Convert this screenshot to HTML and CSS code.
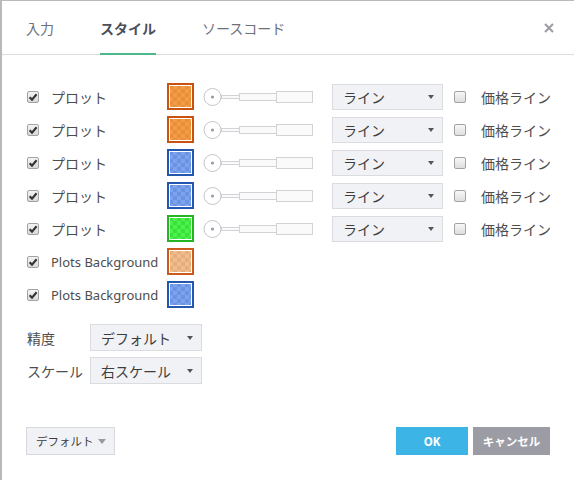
FILE: index.html
```html
<!DOCTYPE html>
<html lang="ja">
<head>
<meta charset="utf-8">
<link rel="stylesheet" href="styles.css">
</head>
<body>
<div class="dialog">
  <div class="tabs">
    <div class="tab">入力</div>
    <div class="tab active">スタイル</div>
    <div class="tab">ソースコード</div>
    <div class="close"><svg width="10" height="10" viewBox="0 0 10 10"><path d="M1 1L9 9M9 1L1 9" stroke="#9b9ca4" stroke-width="2"/></svg></div>
  </div>

  <div class="content">
    <div class="rows">
      <div class="row">
        <span class="cb checked"></span><span class="lbl">プロット</span>
        <span class="sw orange"></span>
        <svg class="slider" width="111" height="20" viewBox="0 0 111 20"><rect x="18.5" y="8.5" width="18" height="3" fill="#fafafa" stroke="#d2d3d6"/><rect x="36.5" y="6.5" width="37" height="7" fill="#fafafa" stroke="#d2d3d6"/><rect x="73.5" y="4.5" width="36" height="11" fill="#fafafa" stroke="#d2d3d6"/><circle cx="9.5" cy="10" r="8.5" fill="#fff" stroke="#c4c6cb"/><circle cx="9.5" cy="10" r="1.6" fill="#9a9ca3"/></svg>
        <div class="dd wide"><span>ライン</span><i class="arr"></i></div>
        <span class="cb"></span><span class="lbl">価格ライン</span>
      </div>
      <div class="row">
        <span class="cb checked"></span><span class="lbl">プロット</span>
        <span class="sw orange"></span>
        <svg class="slider" width="111" height="20" viewBox="0 0 111 20"><rect x="18.5" y="8.5" width="18" height="3" fill="#fafafa" stroke="#d2d3d6"/><rect x="36.5" y="6.5" width="37" height="7" fill="#fafafa" stroke="#d2d3d6"/><rect x="73.5" y="4.5" width="36" height="11" fill="#fafafa" stroke="#d2d3d6"/><circle cx="9.5" cy="10" r="8.5" fill="#fff" stroke="#c4c6cb"/><circle cx="9.5" cy="10" r="1.6" fill="#9a9ca3"/></svg>
        <div class="dd wide"><span>ライン</span><i class="arr"></i></div>
        <span class="cb"></span><span class="lbl">価格ライン</span>
      </div>
      <div class="row">
        <span class="cb checked"></span><span class="lbl">プロット</span>
        <span class="sw blue"></span>
        <svg class="slider" width="111" height="20" viewBox="0 0 111 20"><rect x="18.5" y="8.5" width="18" height="3" fill="#fafafa" stroke="#d2d3d6"/><rect x="36.5" y="6.5" width="37" height="7" fill="#fafafa" stroke="#d2d3d6"/><rect x="73.5" y="4.5" width="36" height="11" fill="#fafafa" stroke="#d2d3d6"/><circle cx="9.5" cy="10" r="8.5" fill="#fff" stroke="#c4c6cb"/><circle cx="9.5" cy="10" r="1.6" fill="#9a9ca3"/></svg>
        <div class="dd wide"><span>ライン</span><i class="arr"></i></div>
        <span class="cb"></span><span class="lbl">価格ライン</span>
      </div>
      <div class="row">
        <span class="cb checked"></span><span class="lbl">プロット</span>
        <span class="sw blue"></span>
        <svg class="slider" width="111" height="20" viewBox="0 0 111 20"><rect x="18.5" y="8.5" width="18" height="3" fill="#fafafa" stroke="#d2d3d6"/><rect x="36.5" y="6.5" width="37" height="7" fill="#fafafa" stroke="#d2d3d6"/><rect x="73.5" y="4.5" width="36" height="11" fill="#fafafa" stroke="#d2d3d6"/><circle cx="9.5" cy="10" r="8.5" fill="#fff" stroke="#c4c6cb"/><circle cx="9.5" cy="10" r="1.6" fill="#9a9ca3"/></svg>
        <div class="dd wide"><span>ライン</span><i class="arr"></i></div>
        <span class="cb"></span><span class="lbl">価格ライン</span>
      </div>
      <div class="row">
        <span class="cb checked"></span><span class="lbl">プロット</span>
        <span class="sw green"></span>
        <svg class="slider" width="111" height="20" viewBox="0 0 111 20"><rect x="18.5" y="8.5" width="18" height="3" fill="#fafafa" stroke="#d2d3d6"/><rect x="36.5" y="6.5" width="37" height="7" fill="#fafafa" stroke="#d2d3d6"/><rect x="73.5" y="4.5" width="36" height="11" fill="#fafafa" stroke="#d2d3d6"/><circle cx="9.5" cy="10" r="8.5" fill="#fff" stroke="#c4c6cb"/><circle cx="9.5" cy="10" r="1.6" fill="#9a9ca3"/></svg>
        <div class="dd wide"><span>ライン</span><i class="arr"></i></div>
        <span class="cb"></span><span class="lbl">価格ライン</span>
      </div>
      <div class="row">
        <span class="cb checked"></span><span class="lbl latin">Plots Background</span>
        <span class="sw lorange"></span>
      </div>
      <div class="row">
        <span class="cb checked"></span><span class="lbl latin">Plots Background</span>
        <span class="sw blue"></span>
      </div>
    </div>

    <div class="settings">
      <div class="srow">
        <span class="lbl">精度</span>
        <div class="dd"><span>デフォルト</span><i class="arr"></i></div>
      </div>
      <div class="srow">
        <span class="lbl">スケール</span>
        <div class="dd"><span>右スケール</span><i class="arr"></i></div>
      </div>
    </div>
  </div>

  <div class="footer">
    <div class="btn-default"><span>デフォルト</span><i class="arr gray"></i></div>
    <div class="actions">
      <div class="btn ok">OK</div>
      <div class="btn cancel">キャンセル</div>
    </div>
  </div>
</div>
</body>
</html>
```
FILE: styles.css
```css
* { box-sizing: border-box; }
html, body { margin: 0; padding: 0; background: #fff; }
body {
  font-family: "Noto Sans", "Noto Sans CJK JP", sans-serif;
  color: #4a4a4a;
}
.dialog {
  width: 574px;
  height: 480px;
  border-top: 1px solid #b9b9b9;
  border-left: 2px solid #b9b9b9;
  display: flex;
  flex-direction: column;
}
.tabs {
  height: 54px;
  border-bottom: 1px solid #dcdcdc;
  display: flex;
  align-items: stretch;
  padding-left: 24px;
  gap: 46px;
}
.tab {
  font-family: "Noto Sans CJK JP", sans-serif;
  font-size: 14px;
  color: #6d717a;
  display: flex;
  align-items: center;
  padding-top: 2px;
  border-bottom: 2px solid transparent;
  margin-bottom: -1px;
}
.tab.active {
  font-weight: bold;
  color: #4a4f5a;
  border-bottom-color: #4fb889;
}
.close {
  margin-left: auto;
  margin-right: 20px;
  display: flex;
  align-items: center;
  padding-top: 1px;
}
.close svg { display: block; }

.content {
  padding: 28px 0 0 25px;
}
.rows {
  display: flex;
  flex-direction: column;
  gap: 6px;
}
.row {
  height: 27px;
  display: grid;
  grid-template-columns: 24px 116px 36px 129px 122px 27px auto;
  align-items: center;
}
.lbl {
  font-family: "Noto Sans CJK JP", sans-serif;
  font-size: 14px;
  color: #4d4d4d;
  white-space: nowrap;
}
.lbl.latin {
  font-family: "Noto Sans", sans-serif;
  font-size: 13px;
}
.cb {
  width: 12px;
  height: 12px;
  border: 1px solid #a3a3a3;
  border-radius: 2px;
  background: linear-gradient(#f7f7f7, #dedede);
  display: block;
}
.cb.checked {
  background: url("data:image/svg+xml,%3Csvg xmlns='http://www.w3.org/2000/svg' width='10' height='10' viewBox='0 0 10 10'%3E%3Cpath d='M1.6 5.2L4 7.6L8.6 2.2' fill='none' stroke='%23333' stroke-width='2.1'/%3E%3C/svg%3E") center/10px 10px no-repeat, linear-gradient(#f4f4f4, #d9d9d9);
}
.sw {
  width: 27px;
  height: 27px;
  border: 2px solid;
  padding: 1px;
  background-clip: content-box;
  display: block;
}
.sw.orange {
  border-color: #c9530e;
  background-image: repeating-conic-gradient(#f39b45 0 25%, #e88f3c 0 50%);
  background-size: 8px 8px;
}
.sw.blue {
  border-color: #2356b0;
  background-image: repeating-conic-gradient(#7ca3ee 0 25%, #6c93e2 0 50%);
  background-size: 8px 8px;
}
.sw.green {
  border-color: #22b422;
  background-image: repeating-conic-gradient(#4cf24c 0 25%, #3be03b 0 50%);
  background-size: 8px 8px;
}
.sw.lorange {
  border-color: #cc5a1c;
  background-image: repeating-conic-gradient(#f2bd8c 0 25%, #e5ae7f 0 50%);
  background-size: 8px 8px;
}
.slider { display: block; }

.dd {
  height: 27px;
  width: 112px;
  background: #f1f2f5;
  border: 1px solid #dbdce0;
  display: flex;
  align-items: center;
  justify-content: space-between;
  padding: 0 8px 0 10px;
  font-family: "Noto Sans CJK JP", sans-serif;
  font-size: 14px;
  color: #3d3d3d;
}
.dd.wide { width: 111px; height: 26px; }
.arr {
  width: 0;
  height: 0;
  border-left: 3.5px solid transparent;
  border-right: 3.5px solid transparent;
  border-top: 4px solid #555;
  display: block;
}
.arr.gray {
  border-left-width: 4px;
  border-right-width: 4px;
  border-top: 5px solid #9a9a9a;
}

.settings {
  margin-top: 16px;
  display: flex;
  flex-direction: column;
  gap: 6px;
}
.srow {
  display: grid;
  grid-template-columns: 63px 112px;
  align-items: center;
  height: 27px;
}

.footer {
  margin-top: auto;
  padding: 0 24px 25px 24px;
  display: flex;
  justify-content: space-between;
  align-items: center;
}
.btn-default {
  height: 28px;
  width: 89px;
  background: #f1f2f5;
  border: 1px solid #d8d9dd;
  display: flex;
  align-items: center;
  justify-content: space-between;
  padding: 0 8px 0 9px;
  font-family: "Noto Sans CJK JP", sans-serif;
  font-size: 11.5px;
  color: #3d3d3d;
}
.actions {
  display: flex;
  gap: 5px;
}
.btn {
  height: 28px;
  display: flex;
  align-items: center;
  justify-content: center;
  color: #fff;
  font-family: "Noto Sans", "Noto Sans CJK JP", sans-serif;
  font-weight: bold;
  font-size: 11.5px;
}
.btn.ok { width: 72px; background: #3cb4e5; }
.btn.cancel { width: 77px; background: #9b9ca4; }
```
